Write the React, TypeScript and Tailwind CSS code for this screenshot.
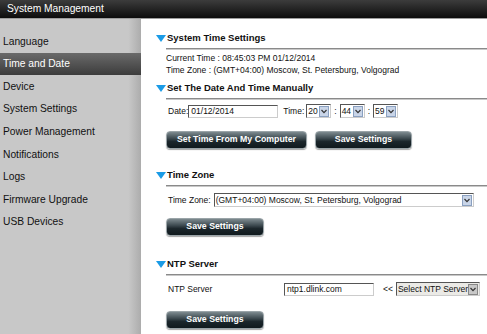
import React from "react";

const MENU = [
  "Language",
  "Time and Date",
  "Device",
  "System Settings",
  "Power Management",
  "Notifications",
  "Logs",
  "Firmware Upgrade",
  "USB Devices",
];

function Triangle() {
  return (
    <svg width="10" height="7" viewBox="0 0 10 7" className="shrink-0">
      <polygon points="0,0 10,0 5,7" fill="#1a9be6" />
    </svg>
  );
}

function SectionTitle({ title }: { title: string }) {
  return (
    <div className="flex flex-col">
      <div className="flex items-center gap-[1px] -ml-[10px] h-[14px]">
        <Triangle />
        <span className="text-[9.5px] font-bold text-[#111]">{title}</span>
      </div>
      <div className="mt-[3px] h-[2px] bg-[#8a8a8a] border-b border-[#c8c8c8]" />
    </div>
  );
}

function Arrow({ gray }: { gray?: boolean }) {
  return (
    <div
      className={
        gray
          ? "w-[10px] h-[11px] shrink-0 flex items-center justify-center bg-[#c8c8c8] border border-[#888]"
          : "w-[10px] h-[11px] shrink-0 flex items-center justify-center bg-[#c9d5e8] border border-[#8aa0c0]"
      }
    >
      <svg width="6" height="5" viewBox="0 0 6 5">
        <polyline points="0.5,1 3,3.6 5.5,1" fill="none" stroke="#333" strokeWidth="1.2" />
      </svg>
    </div>
  );
}

function Select({ value, width, gray }: { value: string; width: string; gray?: boolean }) {
  return (
    <div
      className={`${width} shrink-0 h-[14px] flex items-center justify-between border border-[#555] border-r-[#ccc] border-b-[#ccc] pl-[1px] pr-[1px] ${
        gray ? "bg-[#ebeae6]" : "bg-white"
      }`}
    >
      <span className="text-[8.5px] leading-none text-[#111] whitespace-nowrap">{value}</span>
      <Arrow gray={gray} />
    </div>
  );
}

function Input({ value, width }: { value: string; width: string }) {
  return (
    <div
      className={`${width} shrink-0 h-[13px] flex items-center border border-[#555] border-r-[#ccc] border-b-[#ccc] bg-white pl-[2px]`}
    >
      <span className="text-[8.5px] leading-none text-[#111]">{value}</span>
    </div>
  );
}

function Button({ label, width }: { label: string; width: string }) {
  return (
    <div
      className={`${width} h-[18px] flex items-center justify-center rounded-[4px] border border-[#9aa4a8] bg-[linear-gradient(to_bottom,#7d8a8f_0%,#3d4a50_40%,#1b262b_60%,#101a1e_100%)] shadow-[0_1px_1px_rgba(0,0,0,0.35)]`}
    >
      <span className="text-[8.75px] font-bold text-white">{label}</span>
    </div>
  );
}

export default function App() {
  return (
    <div className="w-[487px] h-[334px] overflow-hidden bg-white font-['Liberation_Sans',Arial,sans-serif]">
      <div className="h-[19px] bg-[linear-gradient(to_bottom,#3c3c3c,#0c0c0c)] flex items-center pl-[7px] border-b border-[#9d9d9d]">
        <span className="text-[10.25px] text-white">System Management</span>
      </div>
      <div className="flex h-[315px]">
        <div className="w-[141px] bg-[linear-gradient(to_right,#c8c8c8_0%,#c8c8c8_91%,#acacac_100%)] pt-[11px]">
          {MENU.map((m) => (
            <div
              key={m}
              className={
                m === "Time and Date"
                  ? "h-[22.6px] flex items-center pl-[3px] bg-[linear-gradient(to_bottom,#6a6a6a,#3c3c3c)] text-white"
                  : "h-[22.6px] flex items-center pl-[3px] text-[#111]"
              }
            >
              <span className="text-[10.25px]">{m}</span>
            </div>
          ))}
        </div>
        <div className="flex-1 pl-[25px] pt-[12px] text-[8.5px] text-[#111]">
          <SectionTitle title="System Time Settings" />
          <div className="mt-[3px] leading-[11.5px]">
            <div>Current Time : 08:45:03 PM 01/12/2014</div>
            <div>Time Zone : (GMT+04:00) Moscow, St. Petersburg, Volgograd</div>
          </div>
          <div className="mt-[5px]">
            <SectionTitle title="Set The Date And Time Manually" />
          </div>
          <div className="mt-[4px] flex items-center pl-[2px] h-[14px]">
            <span>Date:</span>
            <Input value="01/12/2014" width="w-[90px]" />
            <span className="ml-[5px] mr-[2px]">Time:</span>
            <Select value="20" width="w-[25px]" />
            <span className="mx-[3px]">:</span>
            <Select value="44" width="w-[25px]" />
            <span className="mx-[3px]">:</span>
            <Select value="59" width="w-[25px]" />
          </div>
          <div className="mt-[13px] flex gap-[8px]">
            <Button label="Set Time From My Computer" width="w-[141px]" />
            <Button label="Save Settings" width="w-[97px]" />
          </div>
          <div className="mt-[19px]">
            <SectionTitle title="Time Zone" />
          </div>
          <div className="mt-[6px] flex items-center pl-[2px] h-[14px]">
            <span className="mr-[3px]">Time Zone:</span>
            <Select value="(GMT+04:00) Moscow, St. Petersburg, Volgograd" width="w-[260px]" />
          </div>
          <div className="mt-[11px]">
            <Button label="Save Settings" width="w-[98px]" />
          </div>
          <div className="mt-[21px]">
            <SectionTitle title="NTP Server" />
          </div>
          <div className="mt-[6px] flex items-center pl-[2px] h-[14px]">
            <span className="w-[116px]">NTP Server</span>
            <Input value="ntp1.dlink.com" width="w-[90px]" />
            <span className="ml-[9px] mr-[3px]">&lt;&lt;</span>
            <Select value="Select NTP Server" width="w-[84px]" gray />
          </div>
          <div className="mt-[15px]">
            <Button label="Save Settings" width="w-[98px]" />
          </div>
        </div>
      </div>
    </div>
  );
}
